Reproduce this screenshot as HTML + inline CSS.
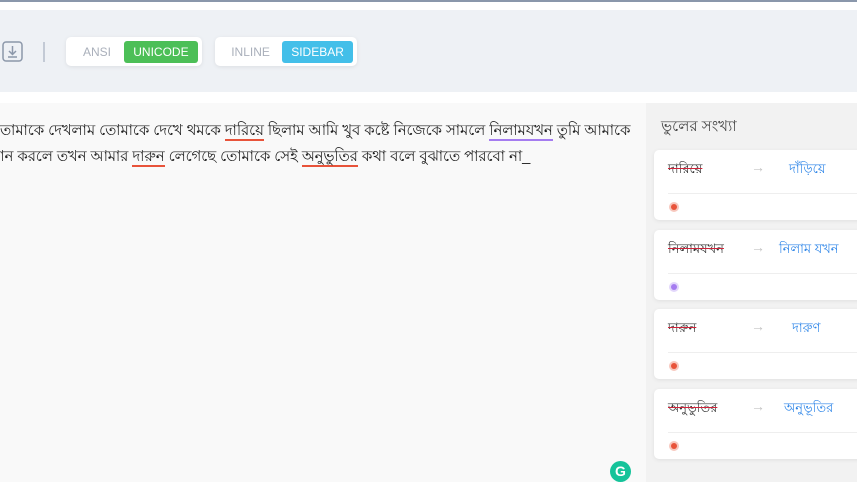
<!DOCTYPE html>
<html><head><meta charset="utf-8"><style>
*{margin:0;padding:0;box-sizing:border-box}
body{width:857px;height:482px;overflow:hidden;background:#fff;font-family:"Liberation Sans",sans-serif;position:relative}
.a{position:absolute}
.topline{left:0;top:0;width:857px;height:2px;background:#8a97ab}
.bar{left:0;top:10px;width:857px;height:82px;background:#eef1f5}
.seg{top:37px;height:29px;background:#fff;border-radius:5px;box-shadow:0 1px 4px rgba(0,0,0,.08);display:flex;align-items:center;padding:0 4px;font-size:12px}
.seg span{display:inline-block;height:22px;line-height:22px;border-radius:3px;text-align:center;color:#aab0bb}
.ed{left:0;top:103px;width:646px;height:379px;background:#f9f9f9}
.txt{left:-6px;top:118px;font-size:14.75px;color:#222;line-height:26px;white-space:nowrap}
.u{border-bottom:2px solid #e8533a}
.up{border-bottom:2px solid #a57cf0}
.side{left:646px;top:103px;width:211px;height:379px;background:#f2f2f2}
.card{left:654px;width:210px;height:70px;background:#fff;border-radius:5px;box-shadow:0 1px 4px rgba(0,0,0,.08)}
.w{position:absolute;left:14px;top:10px;font-size:13px;color:#333;text-decoration:line-through;text-decoration-color:#d0243a}
.arr{position:absolute;left:97px;top:9px;color:#c4c4c4;font-size:14px}
.c{position:absolute;top:10px;font-size:13px;color:#2f86e8}
.hr{position:absolute;left:14px;right:0;top:43px;height:1px;background:#eee}
.dot{position:absolute;left:17px;top:54px;width:6px;height:6px;border-radius:50%;background:#e8533a;box-shadow:0 0 0 2px #f7c7bd}
</style></head><body>
<div class="a topline"></div>
<div class="a bar"></div>
<svg class="a" style="left:2px;top:41px" width="21" height="21" viewBox="0 0 21 21"><rect x="1" y="1" width="19" height="19" rx="3" fill="none" stroke="#8c98aa" stroke-width="1.5"/><path d="M10.5 5v8M7 10l3.5 3.5L14 10M6 16h9" fill="none" stroke="#8c98aa" stroke-width="1.5"/></svg>
<div class="a" style="left:43px;top:42px;width:2px;height:20px;background:#c3cad5"></div>
<div class="a seg" style="left:66px;width:136px"><span style="width:56px">ANSI</span><span style="width:77px;background:#4cbf57;color:#fff">UNICODE</span></div>
<div class="a seg" style="left:215px;width:142px"><span style="width:65px">INLINE</span><span style="width:73px;background:#43bfe9;color:#fff">SIDEBAR</span></div>
<div class="a ed"></div>
<div class="a txt">তোমাকে দেখলাম তোমাকে দেখে থমকে <span class="u">দারিয়ে</span> ছিলাম আমি খুব কষ্টে নিজেকে সামলে <span class="up">নিলামযখন</span> তুমি আমাকে<br><span style="margin-left:-2px">মান</span> করলে তখন আমার <span class="u">দারুন</span> লেগেছে তোমাকে সেই <span class="u">অনুভুতির</span> কথা বলে বুঝাতে পারবো না_</div>
<div class="a side"></div>
<div class="a" style="left:661px;top:115px;font-size:15px;color:#444">ভুলের সংখ্যা</div>
<div class="a card" style="top:150px"><span class="w">দারিয়ে</span><span class="arr">→</span><span class="c" style="left:135px">দাঁড়িয়ে</span><div class="hr"></div><div class="dot"></div></div>
<div class="a card" style="top:230px"><span class="w">নিলামযখন</span><span class="arr">→</span><span class="c" style="left:125px">নিলাম যখন</span><div class="hr"></div><div class="dot" style="background:#a57cf0;box-shadow:0 0 0 2px #e2d6fb"></div></div>
<div class="a card" style="top:309px"><span class="w">দারুন</span><span class="arr">→</span><span class="c" style="left:138px">দারুণ</span><div class="hr"></div><div class="dot"></div></div>
<div class="a card" style="top:389px"><span class="w">অনুভুতির</span><span class="arr">→</span><span class="c" style="left:130px">অনুভূতির</span><div class="hr"></div><div class="dot"></div></div>
<div class="a" style="left:610px;top:461px;width:21px;height:21px;border-radius:50%;background:#15c39a;color:#fff;font-weight:bold;font-size:14px;text-align:center;line-height:21px">G</div>
</body></html>
